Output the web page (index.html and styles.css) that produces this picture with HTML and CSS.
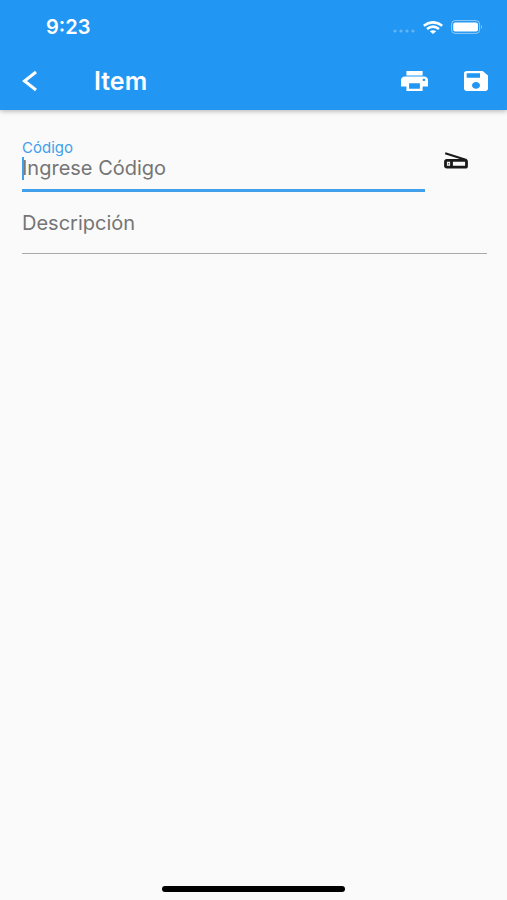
FILE: index.html
```html
<!DOCTYPE html>
<html lang="es">
<head>
<meta charset="utf-8">
<meta name="viewport" content="width=device-width, initial-scale=1">
<title>Item</title>
<link rel="stylesheet" href="styles.css">
</head>
<body>
<header class="header">
  <div class="status">
    <span class="time">9:23</span>
    <div class="indicators">
      <svg class="signal" viewBox="0 0 22 4" aria-hidden="true"><circle cx="2" cy="2" r="1.6"/><circle cx="8" cy="2" r="1.6"/><circle cx="14" cy="2" r="1.6"/><circle cx="20" cy="2" r="1.6"/></svg>
      <svg class="wifi" viewBox="0 0 20 13" aria-hidden="true"><path class="arc" d="M.8 4.8Q10-2.2 19.2 4.8M4 8Q10 3.4 16 8"/><path d="M6.8 10.3Q10 8 13.2 10.3L10 13Z"/></svg>
      <svg class="battery" viewBox="0 0 32 14" aria-hidden="true"><rect class="case" x=".6" y=".6" width="28" height="12.8" rx="3.5"/><rect x="2.2" y="2.6" width="24.8" height="8.8" rx="2"/><path class="cap" d="M30 5Q32 7 30 9Z"/></svg>
    </div>
  </div>
  <div class="toolbar">
    <button class="icon-button" type="button" aria-label="Volver"><svg class="back" viewBox="0 0 16 22"><path d="M14 2L2.5 11L14 20"/></svg></button>
    <h1 class="title">Item</h1>
    <button class="icon-button" type="button" aria-label="Imprimir"><svg class="print" viewBox="2 3 20 18" preserveAspectRatio="none"><path d="M19 8H5c-1.66 0-3 1.34-3 3v6h4v4h12v-4h4v-6c0-1.66-1.34-3-3-3zm-3 11H8v-5h8v5zm3-7c-.55 0-1-.45-1-1s.45-1 1-1 1 .45 1 1-.45 1-1 1zm-1-9H6v4h12V3z"/></svg></button>
    <button class="icon-button" type="button" aria-label="Guardar"><svg class="save" viewBox="3 3 18 18" preserveAspectRatio="none"><path d="M17 3H5c-1.11 0-2 .9-2 2v14c0 1.1.89 2 2 2h14c1.1 0 2-.9 2-2V7l-4-4zm-5 16c-1.66 0-3-1.34-3-3s1.34-3 3-3 3 1.34 3 3-1.34 3-3 3zm3-10H5V5h10v4z"/></svg></button>
  </div>
</header>
<main class="form">
  <div class="row">
    <div class="field active">
      <label class="label" for="code">Código</label>
      <input class="input" id="code" type="text" placeholder="Ingrese Código">
      <span class="caret"></span>
    </div>
    <button class="scan-button" type="button" aria-label="Escanear"><svg class="scan" viewBox="0 0 24 17"><path class="lid" d="M1.2 1.2L22.5 8"/><rect x="1.5" y="8.3" width="21" height="6.9" rx="1.2"/><path d="M7.5 8.3V15.2"/><path class="thin" d="M3.8 11.8H5.2"/></svg></button>
  </div>
  <div class="field">
    <input class="input" type="text" placeholder="Descripción" aria-label="Descripción">
  </div>
</main>
<footer class="home"><div class="home-bar"></div></footer>
</body>
</html>
```
FILE: styles.css
```css
* { box-sizing: border-box; }
body {
  margin: 0;
  min-height: 100vh;
  display: flex;
  flex-direction: column;
  background: #fafafa;
  color: #1a1a1a;
  font-family: Inter, "Liberation Sans", sans-serif;
}
svg { display: block; fill: currentColor; }
button { padding: 0; border: 0; background: none; color: inherit; }
.header {
  background: #2196f3;
  color: #fff;
  box-shadow: 0 1px 5px rgba(0, 0, 0, .3);
}
.status {
  height: 54px;
  padding: 0 24px 0 46px;
  display: flex;
  align-items: center;
  justify-content: space-between;
}
.time { font-size: 20px; line-height: 24px; font-weight: 600; }
.indicators { display: flex; align-items: center; gap: 8px; }
.signal { width: 22px; height: 4px; margin-top: 8px; opacity: .3; }
.wifi { width: 20px; height: 13px; }
.arc { fill: none; stroke: currentColor; stroke-width: 2.6; }
.battery { width: 32px; height: 14px; }
.case { fill: none; stroke: currentColor; stroke-width: 1; opacity: .5; }
.cap { opacity: .5; }
.toolbar {
  height: 56px;
  padding: 0 7px 2px 6px;
  display: flex;
  align-items: center;
  gap: 14px;
}
.icon-button { width: 48px; height: 48px; display: grid; place-items: center; }
.title {
  flex: 1;
  margin: 0;
  padding-left: 26px;
  font-size: 25px;
  line-height: 28px;
  font-weight: 600;
}
.back { width: 16px; height: 22px; fill: none; stroke: currentColor; stroke-width: 3; }
.print { width: 27px; height: 20px; }
.save { width: 24px; height: 20px; }
.form { flex: 1; padding: 30px 20px 0 22px; }
.row { display: flex; align-items: flex-start; }
.field {
  position: relative;
  flex: 1;
  border-bottom: 1px solid #aaa;
}
.active { border-bottom: 3px solid #429fe9; }
.label { display: block; font-size: 15px; line-height: 16px; color: #429fe9; }
.input {
  display: block;
  width: 100%;
  height: 61px;
  padding: 0;
  border: 0;
  outline: 0;
  background: none;
  color: #222;
  font: 20px/24px Inter, "Liberation Sans", sans-serif;
}
.active .input { height: 24px; margin-bottom: 9px; }
.input::placeholder { color: #757575; opacity: 1; }
.caret {
  position: absolute;
  left: 0;
  top: 17px;
  width: 2px;
  height: 23px;
  background: #429fe9;
}
.scan-button { width: 62px; height: 40px; display: grid; place-items: center; }
.scan { width: 24px; height: 17px; fill: none; stroke: currentColor; stroke-width: 2.8; }
.lid { stroke-width: 2.2; }
.thin { stroke-width: 1; }
.home { padding: 0 0 8px; display: flex; justify-content: center; }
.home-bar { width: 36%; height: 6px; border-radius: 3px; background: #000; }
```
